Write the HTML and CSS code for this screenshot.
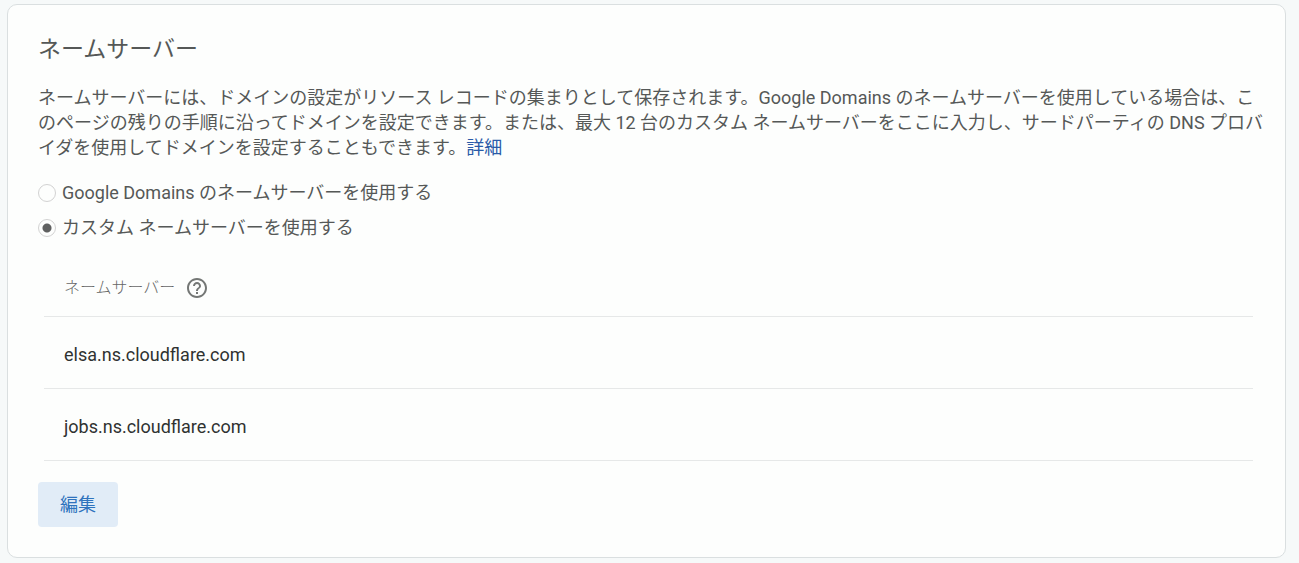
FILE: index.html
```
<!DOCTYPE html>
<html lang="ja">
<head>
    <meta charset="UTF-8">
    <meta name="viewport" content="width=device-width, initial-scale=1.0">
    <title>ネームサーバー</title>
    <link rel="stylesheet" href="styles.css">
</head>
<body>
    <main class="card">
        <h1>ネームサーバー</h1>
        <p class="description">ネームサーバーには、ドメインの設定がリソース レコードの集まりとして保存されます。Google Domains のネームサーバーを使用している場合は、このページの残りの手順に沿ってドメインを設定できます。または、最大 12 台のカスタム ネームサーバーをここに入力し、サードパーティの DNS プロバイダを使用してドメインを設定することもできます。<a href="#">詳細</a></p>

        <div class="options">
            <label class="option">
                <input type="radio" name="nameserver" value="google">
                Google Domains のネームサーバーを使用する
            </label>
            <label class="option">
                <input type="radio" name="nameserver" value="custom" checked>
                カスタム ネームサーバーを使用する
            </label>
        </div>

        <table class="servers">
            <thead>
                <tr>
                    <th scope="col">
                        <div class="heading">
                            ネームサーバー
                            <button type="button" class="help" aria-label="ヘルプ">
                                <svg viewBox="0 0 24 24" width="24" height="24" fill="currentColor">
                                    <path d="M11 18h2v-2h-2v2zm1-16C6.48 2 2 6.48 2 12s4.48 10 10 10 10-4.480 10-10S17.520 2 12 2zm0 18c-4.410 0-8-3.590-8-8s3.590-8 8-8 8 3.590 8 8-3.590 8-8 8zm0-14c-2.210 0-4 1.790-4 4h2c0-1.100.9-2 2-2s2 .9 2 2c0 2-3 1.750-3 5h2c0-2.250 3-2.500 3-5 0-2.210-1.790-4-4-4z"/>
                                </svg>
                            </button>
                        </div>
                    </th>
                </tr>
            </thead>
            <tbody>
                <tr><td>elsa.ns.cloudflare.com</td></tr>
                <tr><td>jobs.ns.cloudflare.com</td></tr>
            </tbody>
        </table>

        <button type="button" class="edit">編集</button>
    </main>
</body>
</html>
```
FILE: styles.css
```
* {
    margin: 0;
    padding: 0;
    box-sizing: border-box;
}

body {
    font-family: Roboto, "Noto Sans CJK JP", sans-serif;
    font-size: 18px;
    line-height: 25px;
    color: #555857;
    background-color: #f6f9f9;
    padding: 4px 13px 4px 7px;
}

.card {
    background: #fdfefd;
    border: 1px solid #dadfe0;
    border-radius: 10px;
    padding: 28px 16px 30px 30px;
}

h1 {
    font-size: 23px;
    font-weight: 400;
    line-height: 34px;
    margin-bottom: 18px;
}

.description {
    margin-bottom: 18px;
}

a {
    color: #2a5ba8;
    text-decoration: none;
}

.options {
    display: flex;
    flex-direction: column;
    align-items: flex-start;
    gap: 5px;
}

.option {
    display: flex;
    align-items: center;
    gap: 6px;
    line-height: 30px;
    cursor: pointer;
}

.option input {
    appearance: none;
    width: 18px;
    height: 18px;
    border: 1px solid #d2d2d2;
    border-radius: 50%;
}

.option input:checked {
    background: radial-gradient(circle, #5f6060 4px, transparent 5px);
}

.servers {
    width: calc(100% - 22px);
    margin: 17px 0 21px 6px;
    border-collapse: collapse;
}

.servers th,
.servers td {
    height: 72px;
    padding-left: 20px;
    text-align: left;
    border-bottom: 1px solid #e6e8e8;
}

.servers th {
    height: 56px;
}

.servers td {
    color: #2f3231;
    padding-top: 4px;
}

.heading {
    display: flex;
    align-items: center;
    gap: 10px;
    font-size: 16px;
    font-weight: 300;
    color: #666;
}

.help {
    display: flex;
    background: none;
    border: none;
    color: #747775;
    cursor: pointer;
}

.edit {
    min-width: 80px;
    height: 45px;
    padding: 0 20px;
    font: inherit;
    color: #2f73bd;
    background: #e1ecf7;
    border: none;
    border-radius: 4px;
    cursor: pointer;
}
```
